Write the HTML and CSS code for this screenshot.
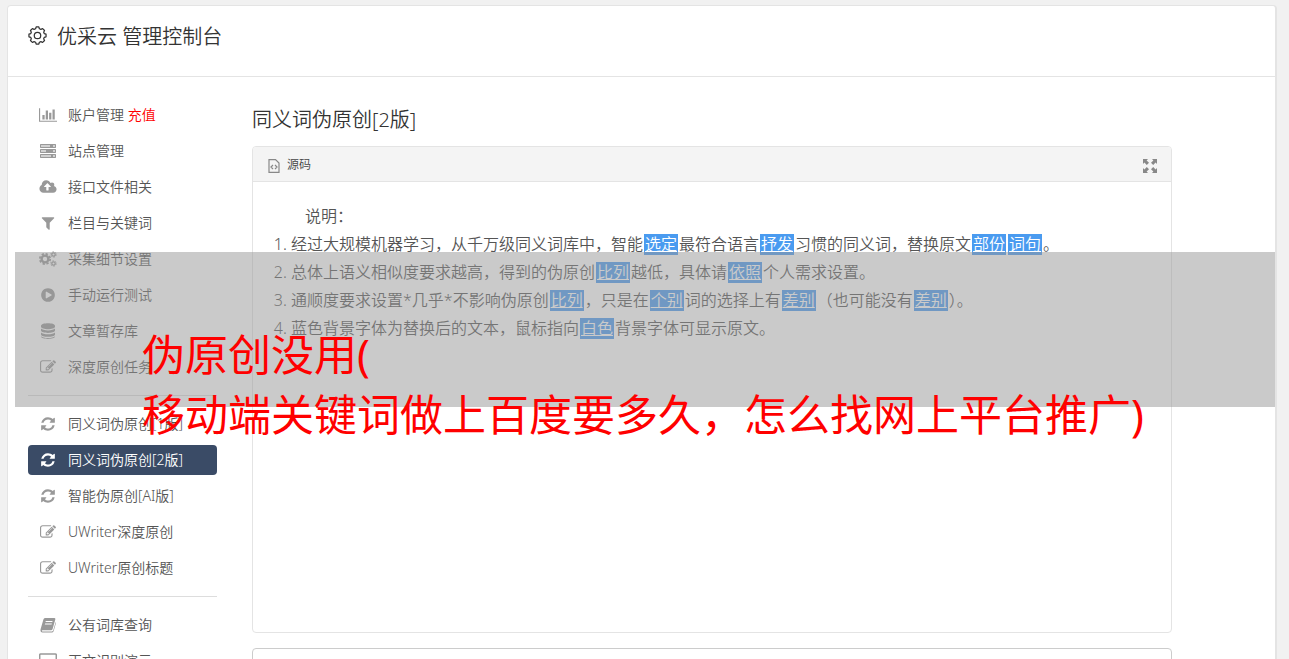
FILE: index.html
```
<!DOCTYPE html>
<html lang="zh-CN">
<head>
    <meta charset="UTF-8">
    <meta name="viewport" content="width=device-width, initial-scale=1.0">
    <title>优采云 管理控制台</title>
    <link rel="stylesheet" href="styles.css">
</head>
<body>

    <!-- Icon set -->
    <svg class="icon-set" aria-hidden="true">
        <symbol id="i-chart" viewBox="0 0 2048 1792"><path d="M640 896v512h-256v-512h256zm384-512v1024h-256v-1024h256zm1024 1152v128h-2048v-1536h128v1408h1920zm-640-896v768h-256v-768h256zm384-384v1152h-256v-1152h256z"/></symbol>
        <symbol id="i-server" viewBox="0 0 16 16"><path opacity=".45" d="M0 1h16v4H0zM0 6h16v4H0zM0 11h16v4H0z"/><path fill="none" stroke="currentColor" d="M.5 1.500h15v3H.5zM.5 6.500h15v3H.5zM.5 11.500h15v3H.5z"/><path d="M10 1h3v4h-3zM6 6h7v4H6zM11 11h2v4h-2z"/></symbol>
        <symbol id="i-cloud" viewBox="-64 0 1920 1792"><path d="M1216 864q0-14-9-23l-352-352q-9-9-23-9t-23 9l-351 351q-10 12-10 24 0 14 9 23t23 9h224v352q0 13 9.500 22.500t22.500 9.500h192q13 0 22.500-9.500t9.500-22.500v-352h224q13 0 22.500-9.500t9.500-22.500zm640 288q0 159-112.500 271.500t-271.500 112.500h-1088q-185 0-316.500-131.500t-131.500-316.500q0-130 70-240t188-165q-2-30-2-43 0-212 150-362t362-150q156 0 285.500 87t188.500 231q71-62 166-62 106 0 181 75t75 181q0 76-41 138 130 31 213.500 135.500t83.500 238.500z"/></symbol>
        <symbol id="i-filter" viewBox="0 0 1792 1792"><path d="M1595 295q17 41-14 70l-493 493v742q0 42-39 59-13 5-25 5-27 0-45-19l-256-256q-19-19-19-45v-486l-493-493q-31-29-14-70 17-39 59-39h1280q42 0 59 39z"/></symbol>
        <symbol id="i-cogs" viewBox="0 0 18 16">
            <g fill="none" stroke="currentColor">
                <circle cx="6" cy="8" r="3.400" stroke-width="2.400"/>
                <circle cx="6" cy="8" r="5.200" stroke-width="1.700" stroke-dasharray="2.300 1.784"/>
                <circle cx="14.500" cy="3.500" r="1.700" stroke-width="1.300"/>
                <circle cx="14.500" cy="3.500" r="2.700" stroke-width="1" stroke-dasharray="1.400 1.427"/>
                <circle cx="14.500" cy="12.500" r="1.700" stroke-width="1.300"/>
                <circle cx="14.500" cy="12.500" r="2.700" stroke-width="1" stroke-dasharray="1.400 1.427"/>
            </g>
        </symbol>
        <symbol id="i-play" viewBox="0 0 1792 1792"><path d="M896 128q209 0 385.500 103t279.500 279.500 103 385.500-103 385.500-279.500 279.500-385.500 103-385.500-103-279.500-279.500-103-385.500 103-385.500 279.500-279.500 385.500-103zm384 823q32-18 32-55t-32-55l-544-320q-31-19-64-1-32 19-32 56v640q0 37 32 56 16 8 32 8 17 0 32-9z"/></symbol>
        <symbol id="i-database" viewBox="0 0 16 16"><path d="M1 2.700C1-.6 15-.6 15 2.700v1C15 7 1 7 1 3.700zM1 5.600c2 2.400 12 2.400 14 0v2c0 3.200-14 3.200-14 0zM1 9.400c2 2.400 12 2.400 14 0v2c0 3.200-14 3.200-14 0zM1 13.200c2 2.400 12 2.400 14 0v.4c0 3.200-14 3.200-14 0z"/></symbol>
        <symbol id="i-edit" viewBox="0 0 1792 1792"><path d="M888 1184l116-116-152-152-116 116v56h96v96h56zm440-720q-16-16-33 1l-350 350q-17 17-1 33t33-1l350-350q17-17 1-33zm80 594v190q0 119-84.500 203.500t-203.500 84.500h-832q-119 0-203.500-84.500t-84.500-203.500v-832q0-119 84.500-203.500t203.500-84.500h832q63 0 117 25 15 7 18 23 3 17-9 29l-49 49q-14 14-32 8-23-6-45-6h-832q-66 0-113 47t-47 113v832q0 66 47 113t113 47h832q66 0 113-47t47-113v-126q0-13 9-22l64-64q15-15 35-7t20 29zm-96-738l288 288-672 672h-288v-288zm444 132l-92 92-288-288 92-92q28-28 68-28t68 28l152 152q28 28 28 68t-28 68z"/></symbol>
        <symbol id="i-refresh" viewBox="-128 -128 1792 1792"><path d="M1511 928q0 5-1 7-64 268-268 434.500t-478 166.500q-146 0-282.500-55t-243.500-157l-129 129q-19 19-45 19t-45-19-19-45v-448q0-26 19-45t45-19h448q26 0 45 19t19 45-19 45l-137 137q71 66 161 102t187 36q134 0 250-65t186-179q11-17 53-117 8-23 30-23h192q13 0 22.500 9.500t9.500 22.500zm25-800v448q0 26-19 45t-45 19h-448q-26 0-45-19t-19-45 19-45l138-138q-148-137-349-137-134 0-250 65t-186 179q-11 17-53 117-8 23-30 23h-199q-13 0-22.500-9.500t-9.500-22.500v-7q65-268 270-434.500t480-166.500q146 0 284 55.500t245 156.500l130-129q19-19 45-19t45 19 19 45z"/></symbol>
        <symbol id="i-book" viewBox="0 0 16 16"><path fill-rule="evenodd" d="M5 1h9.500q1.200.3.800 1.600L12.600 12q-.4 1.200-1.600 1.200H2.500q-.8 0-.6.700.2.500 1 .5H12q.9 0 1.200-.8L15.700 5q.4.600.2 1.300L13.700 14q-.5 1.500-2 1.500H2.600Q.2 15.300.5 12.500L3.400 2.400Q3.800 1.200 5 1zM5.800 4l-.3 1h6.800l.3-1zM5.100 6.400l-.3 1h6.800l.3-1z"/></symbol>
        <symbol id="i-screen" viewBox="0 0 18 16"><path fill="none" stroke="currentColor" stroke-width="1.500" d="M1.700 1h14.600q1 0 1 1v8.500q0 1-1 1H1.700q-1 0-1-1V2q0-1 1-1zM9 12v3M5 15h8"/></symbol>
        <symbol id="i-gear" viewBox="0 0 20 20"><path fill="none" stroke="currentColor" stroke-width="1.300" stroke-linejoin="round" d="M8 2.900 8.600 1h2.800l.6 1.900 1.600.7 1.800-.9 2 2-.9 1.800.6 1.500 1.900.6v2.800l-1.900.6-.6 1.500.9 1.800-2 2-1.800-.9-1.600.7-.6 1.900H8.600L8 17.100l-1.600-.7-1.800.9-2-2 .9-1.800L2.900 12 1 11.400V8.600L2.900 8l.6-1.500-.9-1.800 2-2 1.800.9z"/><circle cx="10" cy="10" r="3.400" fill="none" stroke="currentColor" stroke-width="1.300"/></symbol>
        <symbol id="i-code" viewBox="0 0 12 14"><path fill="none" stroke="currentColor" stroke-width="1.200" d="M1 .6h6.500l3.500 3.400v9.400H1zM5 6 3 8l2 2M7 6l2 2-2 2"/></symbol>
        <symbol id="i-expand" viewBox="0 0 14 14"><path d="M0 0h5L3.600 1.400 6 3.800 3.800 6 1.400 3.600 0 5zM14 0v5l-1.400-1.400L10.200 6 8 3.800l2.400-2.400L9 0zM0 14V9l1.400 1.400L3.800 8 6 10.200l-2.400 2.400L5 14zM14 14H9l1.400-1.400L8 10.200 10.200 8l2.400 2.400L14 9z"/></symbol>
    </svg>

    <div class="console">
        <header class="console-header">
            <svg class="gear"><use href="#i-gear"/></svg>
            <h1>优采云 管理控制台</h1>
        </header>

        <div class="console-body">
            <!-- Sidebar -->
            <nav class="sidebar">
                <a href="#"><svg><use href="#i-chart"/></svg><span>账户管理 <em>充值</em></span></a>
                <a href="#"><svg><use href="#i-server"/></svg><span>站点管理</span></a>
                <a href="#"><svg><use href="#i-cloud"/></svg><span>接口文件相关</span></a>
                <a href="#"><svg><use href="#i-filter"/></svg><span>栏目与关键词</span></a>
                <a href="#"><svg><use href="#i-cogs"/></svg><span>采集细节设置</span></a>
                <a href="#"><svg><use href="#i-play"/></svg><span>手动运行测试</span></a>
                <a href="#"><svg><use href="#i-database"/></svg><span>文章暂存库</span></a>
                <a href="#"><svg><use href="#i-edit"/></svg><span>深度原创任务</span></a>
                <hr>
                <a href="#"><svg><use href="#i-refresh"/></svg><span>同义词伪原创[1版]</span></a>
                <a href="#" class="active"><svg><use href="#i-refresh"/></svg><span>同义词伪原创[2版]</span></a>
                <a href="#"><svg><use href="#i-refresh"/></svg><span>智能伪原创[AI版]</span></a>
                <a href="#"><svg><use href="#i-edit"/></svg><span>UWriter深度原创</span></a>
                <a href="#"><svg><use href="#i-edit"/></svg><span>UWriter原创标题</span></a>
                <hr>
                <a href="#"><svg><use href="#i-book"/></svg><span>公有词库查询</span></a>
                <a href="#"><svg><use href="#i-screen"/></svg><span>正文识别演示</span></a>
            </nav>

            <!-- Editor -->
            <main class="content">
                <h2>同义词伪原创[2版]</h2>
                <section class="editor">
                    <div class="toolbar">
                        <button type="button"><svg class="code"><use href="#i-code"/></svg>源码</button>
                        <button type="button" aria-label="全屏"><svg class="expand"><use href="#i-expand"/></svg></button>
                    </div>
                    <div class="editor-text">
                        <p>说明：</p>
                        <ol>
                            <li>经过大规模机器学习，从千万级同义词库中，智能<u>选定</u>最符合语言<u>抒发</u>习惯的同义词，替换原文<u>部份</u><u>词句</u>。</li>
                            <li>总体上语义相似度要求越高，得到的伪原创<u>比列</u>越低，具体请<u>依照</u>个人需求设置。</li>
                            <li>通顺度要求设置*几乎*不影响伪原创<u>比列</u>，只是在<u>个别</u>词的选择上有<u>差别</u>（也可能没有<u>差别</u>）。</li>
                            <li>蓝色背景字体为替换后的文本，鼠标指向<u>白色</u>背景字体可显示原文。</li>
                        </ol>
                    </div>
                </section>
                <section class="result"></section>
            </main>
        </div>
    </div>

    <!-- Caption over the page -->
    <div class="caption">
        <p>伪原创没用(<br>移动端关键词做上百度要多久，怎么找网上平台推广)</p>
    </div>

</body>
</html>
```
FILE: styles.css
```
* {
    box-sizing: border-box;
}
body {
    position: relative;
    margin: 0;
    padding: 5px 12px 0 7px;
    background-color: #f1f1f1;
    color: #555;
    font-family: "Noto Sans", "Noto Sans CJK SC", sans-serif;
    font-size: 14px;
    font-weight: 350;
}
h1, h2, p, ol {
    margin: 0;
    font-weight: 350;
}
svg {
    fill: currentColor;
    flex-shrink: 0;
}
.icon-set {
    position: absolute;
    width: 0;
    height: 0;
}
.console {
    background: white;
    border: 1px solid #e4e4e4;
    border-right-width: 2px;
    border-radius: 4px;
}
.console-header {
    display: flex;
    align-items: center;
    gap: 10px;
    height: 71px;
    padding: 0 20px 8px;
    border-bottom: 1px solid #e4e4e4;
    color: #333;
}
.gear {
    width: 19px;
    height: 19px;
    margin-bottom: 3px;
}
h1, h2 {
    font-size: 20px;
    line-height: 28px;
    color: #333;
}
.console-body {
    display: flex;
    gap: 35px;
    padding: 23px 103px 20px 20px;
}
.sidebar {
    flex: 0 0 189px;
}
.sidebar a {
    display: flex;
    align-items: center;
    gap: 11px;
    height: 30px;
    margin-bottom: 6px;
    padding: 0 11px;
    border-radius: 4px;
    color: #555;
    text-decoration: none;
    white-space: nowrap;
}
.sidebar svg {
    width: 18px;
    height: 16px;
    color: #999;
}
.sidebar span {
    padding-bottom: 2px;
}
.sidebar em {
    font-style: normal;
    color: red;
}
.sidebar .active, .sidebar .active svg {
    background: #3a4b66;
    color: white;
}
.sidebar hr {
    height: 1px;
    margin: 13px 0;
    border: 0;
    background: #ddd;
}
.content {
    flex: 1;
    min-width: 0;
    padding-top: 6px;
}
.editor {
    margin-top: 12px;
    border: 1px solid #e4e4e4;
    border-radius: 4px;
}
.toolbar {
    display: flex;
    justify-content: space-between;
    align-items: center;
    height: 35px;
    padding: 0 14px;
    background: #f4f4f4;
    border-bottom: 1px solid #e4e4e4;
    border-radius: 3px 3px 0 0;
}
.toolbar button {
    display: flex;
    align-items: center;
    gap: 6px;
    padding: 0;
    border: 0;
    background: none;
    color: #444;
    font: inherit;
    font-size: 12px;
}
.toolbar svg {
    width: 14px;
    height: 14px;
    margin-top: 3px;
    color: #888;
}
.editor-text {
    min-height: 450px;
    padding: 20px;
    font-size: 16px;
    line-height: 28px;
}
.editor-text p {
    text-indent: 2em;
}
.editor-text ol {
    padding-left: 18px;
}
.editor-text u {
    display: inline-block;
    height: 21px;
    margin: 0 1px;
    padding: 0 1px;
    background: #4a9bf0;
    color: white;
    line-height: 21px;
}
.result {
    height: 200px;
    margin-top: 15px;
    border: 1px solid #ccc;
    border-radius: 4px;
}
.caption {
    position: absolute;
    top: 252px;
    left: 15px;
    right: 14px;
    height: 155px;
    padding: 73px 0 0 127px;
    background: rgba(150, 150, 150, 0.5);
}
.caption p {
    color: red;
    font-size: 43px;
    font-weight: 400;
    line-height: 60px;
    white-space: nowrap;
}
```
